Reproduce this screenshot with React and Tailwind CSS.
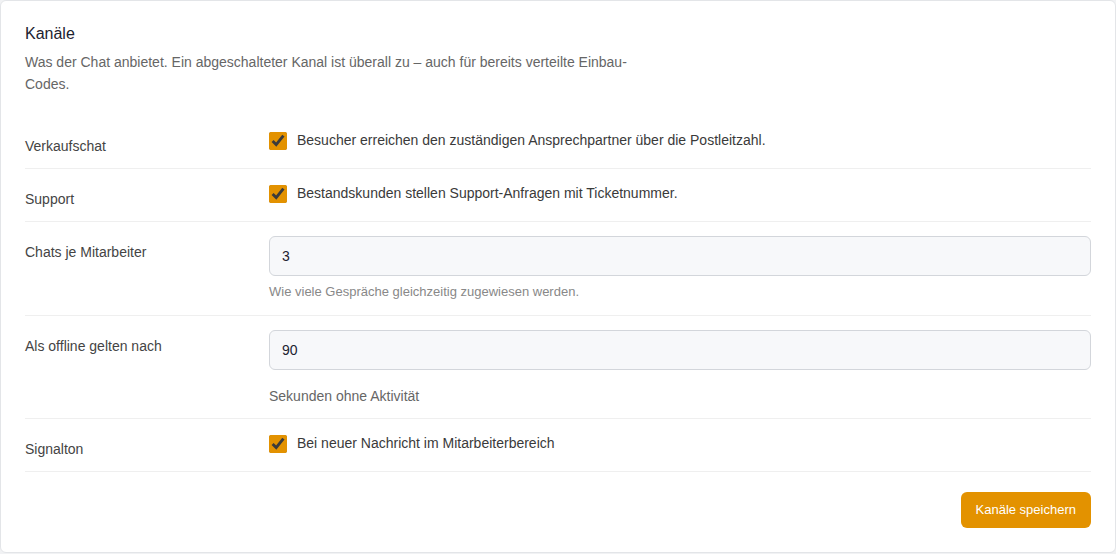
import React, { useState } from 'react';

const font = { fontFamily: '"Liberation Sans", Arial, sans-serif' };

const CheckRow = ({ label, text, checked, onChange }) => (
    <div className="flex py-3.5 border-b border-[#efefef]">
        <div className="w-[244px] shrink-0 pt-2 text-sm leading-4 text-[#444]">{label}</div>
        <label className="flex-1 flex items-start gap-2.5 text-sm leading-5 text-[#3a3a3a] cursor-pointer">
            <input
                type="checkbox"
                checked={checked}
                onChange={onChange}
                className="w-[18px] h-[18px] m-0 mt-0.5 accent-[#e39200] shrink-0"
            />
            <span>{text}</span>
        </label>
    </div>
);

export default function App() {
    const [sales, setSales] = useState(true);
    const [support, setSupport] = useState(true);
    const [sound, setSound] = useState(true);
    const [chats, setChats] = useState('3');
    const [offline, setOffline] = useState('90');

    return (
        <div className="min-h-screen bg-[#f1f2f4]" style={font}>
            <div className="bg-white border border-[#e3e5e8] rounded-md px-6 pt-[23px] pb-6">
                <h2 className="text-base leading-5 text-[#1d2230] font-normal">Kanäle</h2>
                <p className="mt-[7px] max-w-[620px] text-sm leading-[22px] text-[#666]">
                    Was der Chat anbietet. Ein abgeschalteter Kanal ist überall zu – auch für bereits verteilte Einbau-Codes.
                </p>

                <div className="mt-[21px]">
                    <CheckRow
                        label="Verkaufschat"
                        text="Besucher erreichen den zuständigen Ansprechpartner über die Postleitzahl."
                        checked={sales}
                        onChange={() => setSales(!sales)}
                    />
                    <CheckRow
                        label="Support"
                        text="Bestandskunden stellen Support-Anfragen mit Ticketnummer."
                        checked={support}
                        onChange={() => setSupport(!support)}
                    />

                    <div className="flex py-3.5 border-b border-[#efefef]">
                        <div className="w-[244px] shrink-0 pt-2 text-sm leading-4 text-[#444]">Chats je Mitarbeiter</div>
                        <div className="flex-1">
                            <input
                                type="number"
                                value={chats}
                                onChange={(e) => setChats(e.target.value)}
                                className="w-full h-10 px-3 bg-[#f7f8fa] border border-[#d3d6db] rounded-md text-sm text-[#1d2230] outline-none"
                            />
                            <div className="mt-[7px] text-[13px] leading-[18px] text-[#888]">Wie viele Gespräche gleichzeitig zugewiesen werden.</div>
                        </div>
                    </div>

                    <div className="flex pt-3.5 pb-[13px] border-b border-[#efefef]">
                        <div className="w-[244px] shrink-0 pt-2 text-sm leading-4 text-[#444]">Als offline gelten nach</div>
                        <div className="flex-1">
                            <input
                                type="number"
                                value={offline}
                                onChange={(e) => setOffline(e.target.value)}
                                className="w-full h-10 px-3 bg-[#f7f8fa] border border-[#d3d6db] rounded-md text-sm text-[#1d2230] outline-none"
                            />
                            <div className="mt-[17px] text-sm leading-[18px] text-[#666]">Sekunden ohne Aktivität</div>
                        </div>
                    </div>

                    <CheckRow
                        label="Signalton"
                        text="Bei neuer Nachricht im Mitarbeiterbereich"
                        checked={sound}
                        onChange={() => setSound(!sound)}
                    />
                </div>

                <div className="flex justify-end pt-5">
                    <button className="h-9 px-[15px] bg-[#e39200] hover:bg-[#cf8500] text-white text-[13px] rounded-md">
                        Kanäle speichern
                    </button>
                </div>
            </div>
        </div>
    );
}
